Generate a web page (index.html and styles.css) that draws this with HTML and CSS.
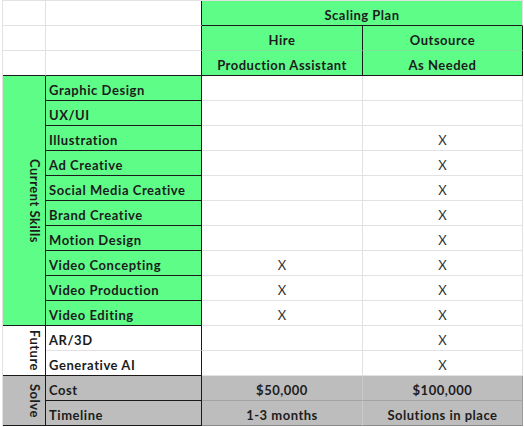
FILE: index.html
```html
<!DOCTYPE html>
<html>
<head>
<meta charset="utf-8">
<link rel="stylesheet" href="styles.css">
</head>
<body>
<div class="sheet">
  <div class="c"></div>
  <div class="c dr"></div>
  <div class="c g hd db span2">Scaling Plan</div>

  <div class="c"></div>
  <div class="c dr"></div>
  <div class="c g hd dr gl">Hire</div>
  <div class="c g hd gl dre">Outsource</div>

  <div class="c db"></div>
  <div class="c dr db"></div>
  <div class="c g hd dr db">Production Assistant</div>
  <div class="c g hd db dre">As Needed</div>

  <div class="c g vt dr db rows10"><span>Current Skills</span></div>
  <div class="c g lbl dr db">Graphic Design</div><div class="c"></div><div class="c"></div>
  <div class="c g lbl dr db">UX/UI</div><div class="c"></div><div class="c"></div>
  <div class="c g lbl dr db">Illustration</div><div class="c"></div><div class="c x">X</div>
  <div class="c g lbl dr db">Ad Creative</div><div class="c"></div><div class="c x">X</div>
  <div class="c g lbl dr db">Social Media Creative</div><div class="c"></div><div class="c x">X</div>
  <div class="c g lbl dr db">Brand Creative</div><div class="c"></div><div class="c x">X</div>
  <div class="c g lbl dr db">Motion Design</div><div class="c"></div><div class="c x">X</div>
  <div class="c g lbl dr db">Video Concepting</div><div class="c x">X</div><div class="c x">X</div>
  <div class="c g lbl dr db">Video Production</div><div class="c x">X</div><div class="c x">X</div>
  <div class="c g lbl dr db">Video Editing</div><div class="c x">X</div><div class="c x">X</div>

  <div class="c vt dr db rows2"><span>Future</span></div>
  <div class="c lbl dr">AR/3D</div><div class="c"></div><div class="c x">X</div>
  <div class="c lbl dr db">Generative AI</div><div class="c"></div><div class="c x">X</div>

  <div class="c s vt dr db rows2"><span>Solve</span></div>
  <div class="c s lbl dr db">Cost</div><div class="c s hd sb">$50,000</div><div class="c s hd sb sr">$100,000</div>
  <div class="c s lbl dr db">Timeline</div><div class="c s hd sbb">1-3 months</div><div class="c s hd sbb sr">Solutions in place</div>
</div>
</body>
</html>
```

FILE: styles.css
```css
html, body {
  margin: 0;
  padding: 0;
  background: #ffffff;
}

.sheet {
  margin-left: 2px;
  display: grid;
  grid-template-columns: 43px 156px 161px 160px;
  grid-auto-rows: 25px;
  border-top: 1px solid #e2e2e2;
  border-left: 1px solid #e2e2e2;
  width: 520px;
  font-family: "Lato", "Liberation Sans", sans-serif;
  font-size: 13px;
  color: #1c1c1c;
}

.c {
  box-sizing: border-box;
  border-right: 1px solid #e2e2e2;
  border-bottom: 1px solid #e2e2e2;
  display: flex;
  align-items: flex-end;
  padding: 0 3px 2px;
  white-space: nowrap;
  overflow: hidden;
  line-height: 15px;
}

.g { background: #5efd88; }
.s { background: #bdbdbd; }

.dr { border-right-color: #1a1a1a; }
.db { border-bottom-color: #1a1a1a; }
.dre { border-right-color: #1a1a1a; }
.gl { border-bottom-color: #79e598; }

.span2 { grid-column: span 2; }
.rows10 { grid-row: span 10; }
.rows2 { grid-row: span 2; }

.hd {
  justify-content: center;
  font-weight: 700;
  letter-spacing: 0.5px;
}

.lbl {
  font-weight: 700;
  letter-spacing: 0.55px;
}

.x {
  justify-content: center;
  font-weight: 400;
  color: #333333;
  font-size: 13px;
}

.vt {
  align-items: center;
  justify-content: flex-end;
  padding: 0 4px 0 0;
  font-weight: 700;
  letter-spacing: 0.5px;
}

.vt span {
  writing-mode: vertical-rl;
  line-height: 13px;
}

.s.hd { border-right-color: #c9c9c9; }
.s.sr { border-right-color: #9a9a9a; }
.sb { border-bottom-color: #a3a3a3; }
.sbb { border-bottom-color: #8a8a8a; }
```
